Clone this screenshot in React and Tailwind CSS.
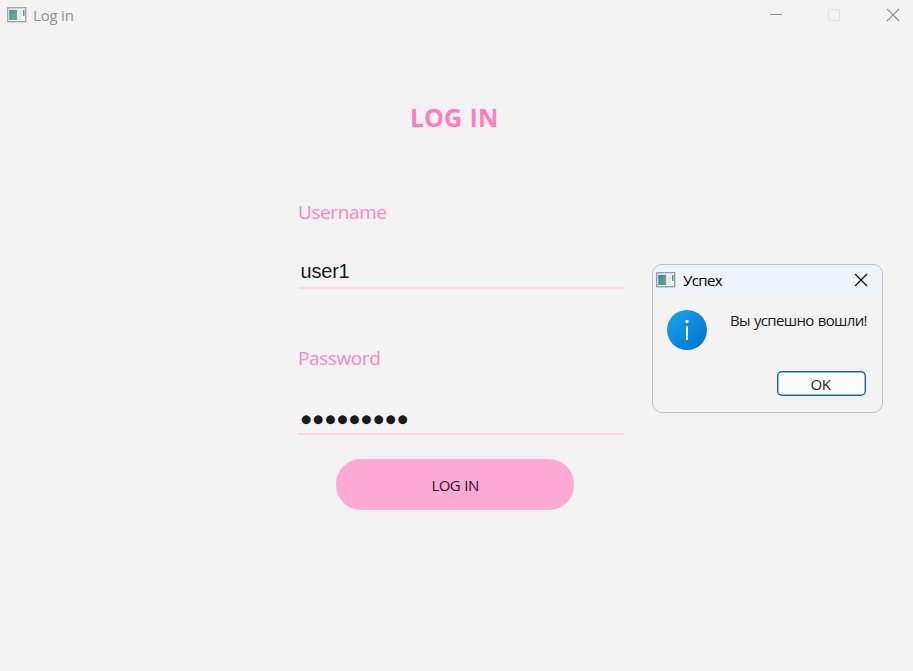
function AppIcon({ faded = false }) {
  return (
    <svg width="20" height="16" viewBox="0 0 20 16" className={faded ? 'shrink-0 opacity-90' : 'shrink-0'}>
      <defs>
        <linearGradient id="pane" x1="0" y1="0" x2="1" y2="1">
          <stop offset="0" stopColor="#4a7fb0" />
          <stop offset="1" stopColor="#5aae7c" />
        </linearGradient>
      </defs>
      <rect x="0.75" y="0.75" width="18" height="14" fill="#f7f7f7" stroke="#8b9097" strokeWidth="1.2" />
      <rect x="2.2" y="2.8" width="8" height="10.2" fill="url(#pane)" />
      <rect x="11.5" y="3" width="3.5" height="10" fill="#e8e8e8" />
      <rect x="16" y="3" width="1.6" height="6" fill="url(#pane)" />
    </svg>
  );
}

function TitleBar() {
  return (
    <header className="flex h-[30px] items-center pl-[7px] text-[#8f8f8f]">
      <AppIcon faded />
      <span className="ml-[6px] text-[15px] leading-[20px] tracking-[-0.2px]">Log in</span>
      <div className="ml-auto flex items-center pr-[13px]">
        <svg width="14" height="14" viewBox="0 0 14 14" className="mr-[44px]">
          <path d="M1 6.5H13" stroke="#8f8f8f" />
        </svg>
        <svg width="14" height="14" viewBox="0 0 14 14" className="mr-[45px]">
          <rect x="1.5" y="1.5" width="11" height="11" rx="1" fill="none" stroke="#dedede" />
        </svg>
        <svg width="14" height="14" viewBox="0 0 14 14">
          <path d="M1 1L13 13M13 1L1 13" stroke="#8f8f8f" strokeWidth="1.1" />
        </svg>
      </div>
    </header>
  );
}

function Dialog() {
  return (
    <section className="absolute left-[652px] top-[264px] flex h-[149px] w-[231px] flex-col overflow-hidden rounded-[10px] border border-[#bfbfbf] bg-[#f3f3f3] text-[#1a1a1a]">
      <div className="flex h-[31px] shrink-0 items-center bg-[#eff3fb] pb-[2px] pl-[3px] pr-[14px] text-black">
        <AppIcon />
        <span className="ml-[7px] text-[15px] leading-[20px] tracking-[-0.6px]">Успех</span>
        <svg width="14" height="14" viewBox="0 0 14 14" className="ml-auto">
          <path d="M1 1L13 13M13 1L1 13" stroke="#111111" strokeWidth="1.3" />
        </svg>
      </div>
      <div className="flex pl-[14px] pt-[14px]">
        <svg width="40" height="40" viewBox="0 0 40 40" className="shrink-0">
          <defs>
            <linearGradient id="info" x1="0" y1="0" x2="1" y2="1">
              <stop offset="0" stopColor="#1fa5e8" />
              <stop offset="1" stopColor="#006fd0" />
            </linearGradient>
          </defs>
          <circle cx="20" cy="20" r="20" fill="url(#info)" />
          <circle cx="20" cy="11.5" r="1.7" fill="#e8f4fc" />
          <rect x="19" y="16" width="2" height="14" rx="0.8" fill="#e8f4fc" />
        </svg>
        <p className="ml-[23px] whitespace-nowrap text-[15px] leading-[20px] tracking-[-0.65px] [word-spacing:0.8px]">Вы успешно вошли!</p>
      </div>
      <button className="ml-[124px] mt-[21px] flex h-[25px] w-[89px] shrink-0 items-center justify-center rounded-[5px] bg-[#fdfdfd] pr-[2px] pt-[1px] text-[15px] leading-[20px] tracking-[-0.5px] ring-[1.4px] ring-inset ring-[#0f65ab]">
        OK
      </button>
    </section>
  );
}

export default function App() {
  return (
    <div className="relative flex h-[671px] w-[913px] flex-col overflow-hidden bg-[#f3f3f3] font-['Open_Sans',sans-serif]">
      <TitleBar />
      <main className="ml-[298px] flex w-[326px] flex-col">
        <h1 className="ml-[112px] mt-[69px] h-[36px] whitespace-nowrap text-[25px] font-bold leading-[36px] text-[#ff7cbf] [word-spacing:1px]">
          LOG IN
        </h1>
        <label className="mt-[63px] h-[28px] text-[19px] leading-[28px] tracking-[-0.4px] text-[#ff84c3]">Username</label>
        <div className="mt-[30px] h-[33px] border-b-2 border-[#ffd6e9] pl-[2.5px] font-['Liberation_Sans',sans-serif] text-[20px] leading-[30px] tracking-[-0.2px] text-[#1a1a1a]">
          user1
        </div>
        <label className="mt-[55px] h-[28px] text-[19px] leading-[28px] tracking-[-0.4px] text-[#ff84c3]">Password</label>
        <div className="mt-[30px] h-[33px] border-b-2 border-[#ffd6e9] pl-[3px] font-['DejaVu_Sans',sans-serif] text-[11.6px] leading-[35px] tracking-[1.95px] text-[#1a1a1a]">
          ●●●●●●●●●
        </div>
        <button className="ml-[38px] mt-[24px] h-[51px] w-[238px] rounded-[25px] bg-[#ffaad5] pt-[2px] text-[15px] tracking-[-0.6px] text-[#1a1a1a] [word-spacing:1px]">
          LOG IN
        </button>
      </main>
      <Dialog />
    </div>
  );
}
